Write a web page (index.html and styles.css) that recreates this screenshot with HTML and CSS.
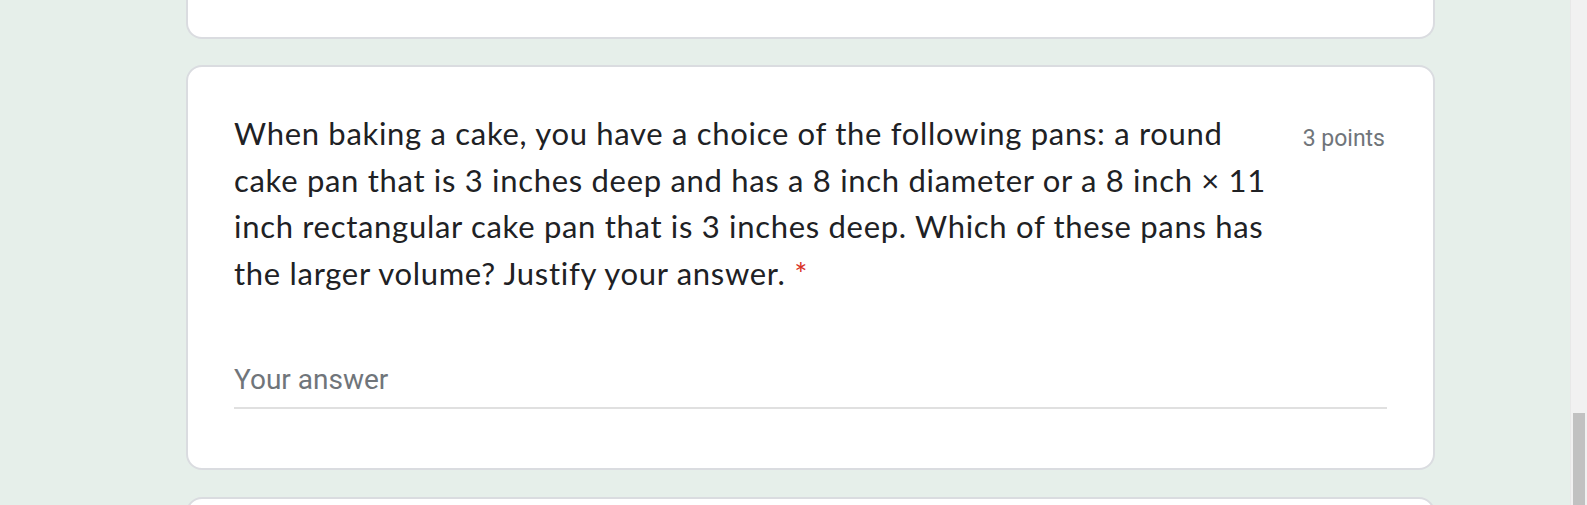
FILE: index.html
```html
<!DOCTYPE html>
<html lang="en">
<head>
<meta charset="utf-8">
<title>Form question</title>
<link rel="stylesheet" href="styles.css">
</head>
<body>
<div class="page">
  <main class="main">
    <div class="card card-tail"></div>
    <section class="card question">
      <div class="q-head">
        <div class="q-title">
          When baking a cake, you have a choice of the following pans: a round<br>
          cake pan that is 3 inches deep and has a 8 inch diameter or a 8 inch × 11<br>
          inch rectangular cake pan that is 3 inches deep. Which of these pans has<br>
          the larger volume? Justify your answer. <span class="req">*</span>
        </div>
        <div class="q-points">3 points</div>
      </div>
      <div class="answer">
        <div class="answer-text">Your answer</div>
        <div class="answer-line"></div>
      </div>
    </section>
    <div class="card card-next"></div>
  </main>
  <div class="scrollbar"><div class="thumb"></div></div>
</div>
</body>
</html>
```

FILE: styles.css
```css
html, body {
  margin: 0;
  padding: 0;
  height: 100%;
  overflow: hidden;
}
body {
  background: #e6efea;
  font-family: "Lato", "Roboto", sans-serif;
}
.page {
  display: flex;
  height: 505px;
}
.main {
  flex: 1;
  display: flex;
  flex-direction: column;
  padding-left: 186px;
  overflow: hidden;
}
.card {
  width: 1249px;
  box-sizing: border-box;
  background: #fff;
  border: 2px solid #dadce0;
  border-radius: 16px;
  flex-shrink: 0;
}
.card-tail {
  height: 39px;
  border-top: none;
  border-radius: 0 0 16px 16px;
}
.question {
  margin-top: 26px;
  height: 405px;
  padding: 43px 48px 0 46px;
}
.card-next {
  height: 40px;
  margin-top: 27px;
}
.q-head {
  display: flex;
  justify-content: space-between;
  align-items: flex-start;
}
.q-title {
  font-size: 31px;
  line-height: 46.5px;
  color: #202124;
  letter-spacing: 0.7px;
}
.req {
  color: #d93025;
}
.q-points {
  font-family: "Roboto", sans-serif;
  font-size: 23px;
  color: #70757a;
  padding-top: 15px;
  white-space: nowrap;
}
.answer {
  margin-top: 66px;
  width: 1153px;
}
.answer-text {
  font-family: "Roboto", sans-serif;
  font-size: 28px;
  color: #70757a;
  line-height: 36px;
}
.answer-line {
  height: 2px;
  background: #e0e0e0;
  margin-top: 9px;
}
.scrollbar {
  width: 16px;
  background: #f1f1f1;
  border-left: 1px solid #e8e8e8;
  display: flex;
  flex-direction: column;
  justify-content: flex-end;
}
.thumb {
  height: 92px;
  margin: 0 2px;
  background: #c1c1c1;
}
```
